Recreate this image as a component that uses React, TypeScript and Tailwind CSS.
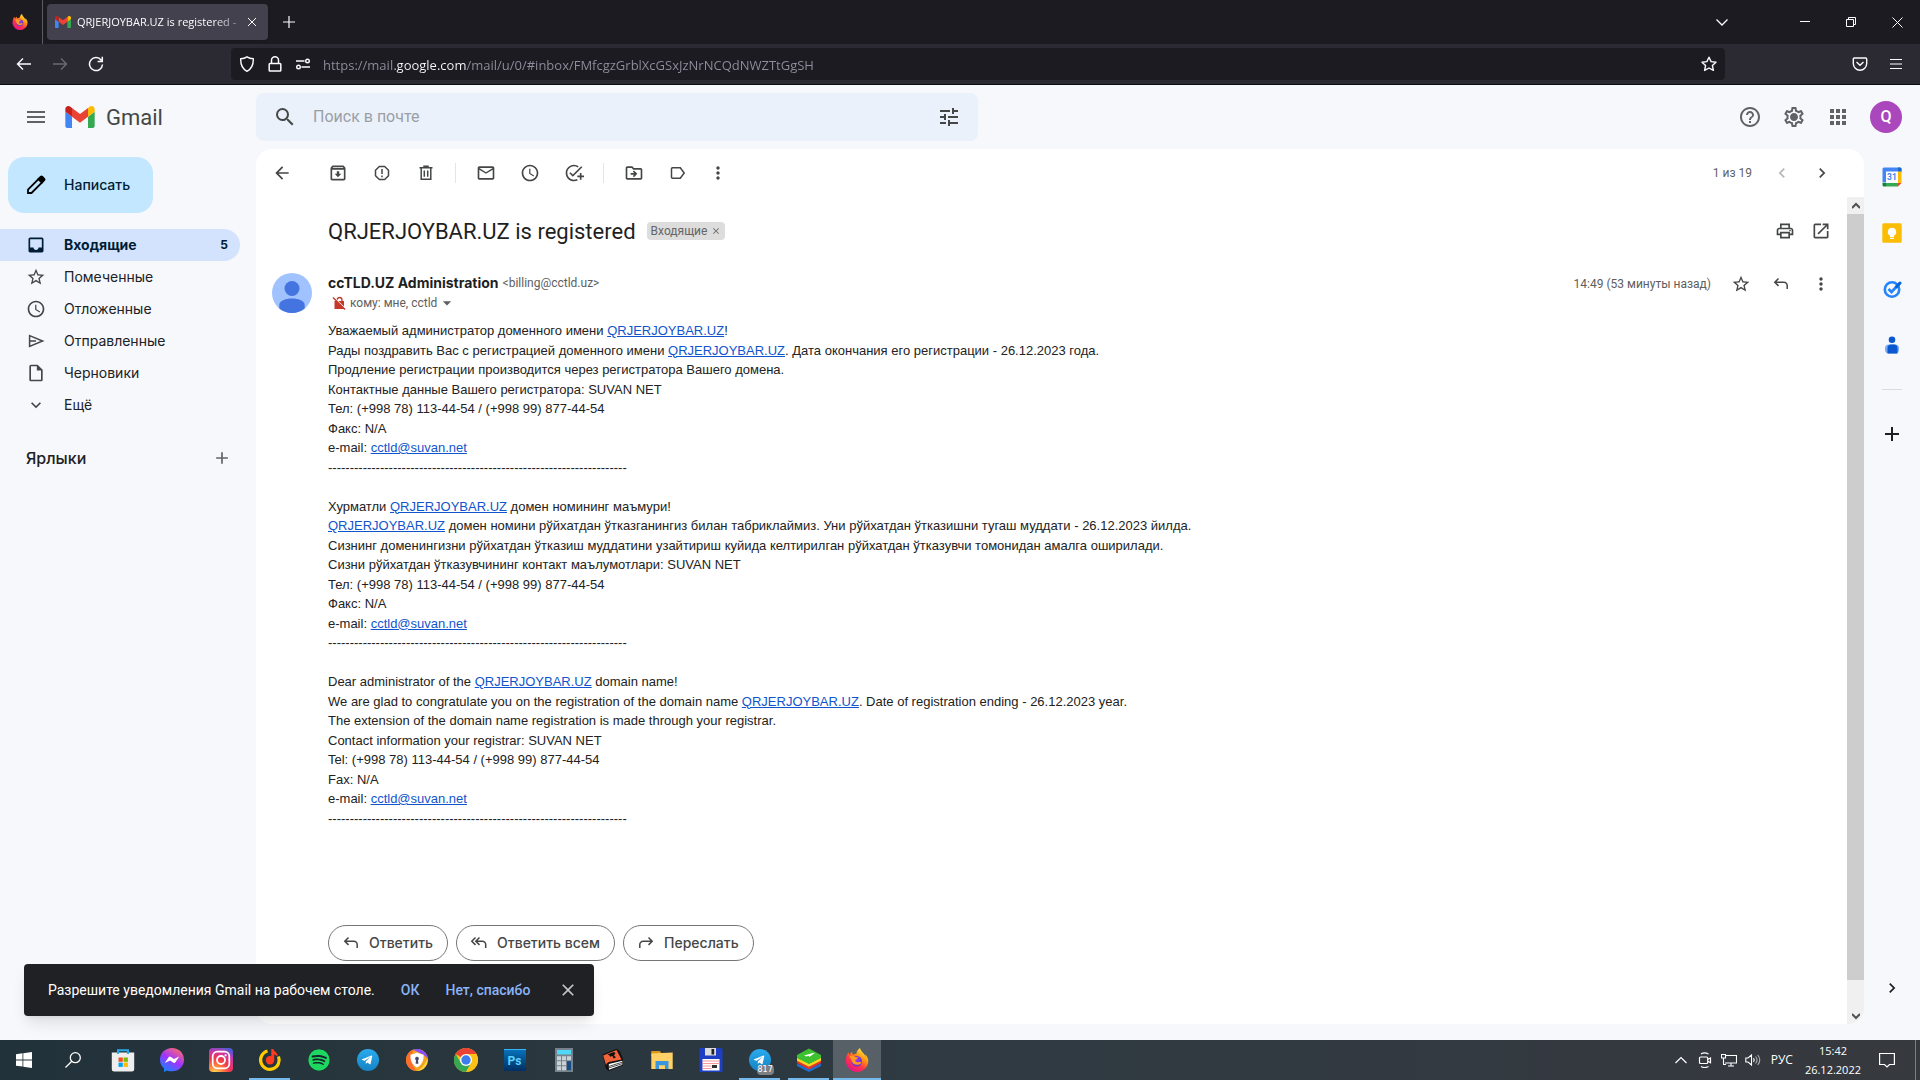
import React from "react";
import {
  MdMenu, MdSearch, MdTune, MdHelpOutline, MdApps, MdArrowBack, MdOutlineArchive, MdMailOutline,
  MdSchedule, MdAddTask, MdOutlineDriveFileMove, MdMoreVert, MdOutlinePrint, MdOpenInNew, MdStarBorder,
  MdInbox, MdOutlineInsertDriveFile, MdExpandMore, MdAdd, MdArrowDropDown, MdChevronLeft,
  MdChevronRight, MdClose, MdOutlineSettings,
} from "react-icons/md";
import { FaSpotify, FaTelegramPlane } from "react-icons/fa";

type IconProps = { className?: string };

function Line({ className = "", box = 20, width = 2, children }: { className?: string; box?: number; width?: number; children: React.ReactNode }) {
  return (
    <svg className={className} viewBox={`0 0 ${box} ${box}`} fill="none" stroke="currentColor" strokeWidth={width} aria-hidden="true">
      {children}
    </svg>
  );
}

/* ---------- drawings ---------- */

function FirefoxLogo({ className }: IconProps) {
  return (
    <svg className={className} viewBox="0 0 24 24" aria-hidden="true">
      <defs>
        <linearGradient id="foxBody" x1="0.85" y1="0.05" x2="0.25" y2="0.95">
          <stop offset="0" stopColor="#fff44f" />
          <stop offset="0.35" stopColor="#ff980e" />
          <stop offset="0.65" stopColor="#ff3647" />
          <stop offset="1" stopColor="#e31587" />
        </linearGradient>
        <radialGradient id="foxGlobe" cx="0.4" cy="0.4" r="0.7">
          <stop offset="0" stopColor="#a33df0" />
          <stop offset="1" stopColor="#5b35c9" />
        </radialGradient>
      </defs>
      <path fill="url(#foxBody)" d="M22.3 9.2c-.5-1.300-1.500-2.600-2.300-3 .6 1.200 1 2.400 1.100 3.300C19.800 6.300 17.600 5 15.800 2.100c-.4-.6-.6-1.200-.7-2-2.600 1.500-3.500 4.200-3.700 5.600-1.200.1-2.300.4-3.200 1-.3-.2-.9-.8-1-2.600-.6.300-1.900 1.300-2.600 2.700C4 6.200 3.800 5 3.900 4.300 2.500 5.300 1 8 .8 12.300.6 18.800 5.600 24 12 24s11.300-5.100 11.300-11.300c0-1.200-.4-2.500-1-3.500z" />
      <circle cx="11.800" cy="13.300" r="5.200" fill="url(#foxGlobe)" />
      <path fill="#ff9a1f" d="M4.500 8.500c2-1.500 4.700-.8 5.600.4 1 .1 2.600.1 3 .5-.2 1.400-2.200 1.500-2.700 2.600-.4 1.300.7 2.600 2.700 2.200 1.500-.4 2.600-.5 3.300.2-1 1.600-2.400 2.400-4.400 2.300-3.500-.2-5.500-2.700-5.700-5.200-.6-.6-1.400-1.500-1.800-3z" />
    </svg>
  );
}

function GmailLogo({ className }: IconProps) {
  return (
    <svg className={className} viewBox="52 42 88 66" aria-hidden="true">
      <path fill="#4285f4" d="M58 108h14V74L52 59v43c0 3.320 2.690 6 6 6" />
      <path fill="#34a853" d="M120 108h14c3.320 0 6-2.690 6-6V59l-20 15" />
      <path fill="#fbbc04" d="M120 48v26l20-15v-8c0-7.420-8.470-11.650-14.400-7.200" />
      <path fill="#ea4335" d="M72 74V48l24 18 24-18v26L96 92" />
      <path fill="#c5221f" d="M52 51v8l20 15V48l-5.600-4.200c-5.940-4.450-14.400-.22-14.400 7.200" />
    </svg>
  );
}

const reportIcon = (
  <Line className="size-5" width={1.5}>
    <path d="M7.300 3.500h5.400l3.800 3.800v5.400l-3.800 3.800H7.300l-3.800-3.800V7.300zM10 6v5M10 12.500v1.700" strokeLinejoin="round" />
  </Line>
);
const trashIcon = (
  <Line className="size-5" width={1.500}>
    <path d="M3.500 4.800h13M8 4.500V3.300h4v1.200M5.200 5v11.200h9.600V5M8.300 7.500v6.300M11.700 7.500v6.300" />
  </Line>
);
const labelIcon = (
  <Line className="size-5" width={1.500}>
    <path d="M4.500 4.700h7.800l3.900 5.300-3.900 5.300H4.500a1 1 0 0 1-1-1V5.700a1 1 0 0 1 1-1z" />
  </Line>
);
const sendIcon = (
  <Line className="size-5" width={1.500}>
    <path d="M3.600 4.600 16.600 10 3.600 15.400zM3.600 10h6.400" />
  </Line>
);
const replyIcon = (
  <Line className="size-5" width={1.500}>
    <path d="M7.500 4.500 3.800 8.200l3.700 3.700M4 8.200h8.800a3.400 3.400 0 0 1 3.400 3.400V15" />
  </Line>
);
const replyAllIcon = (
  <Line className="size-5" width={1.500}>
    <path d="M6.500 4.500 2.800 8.200l3.700 3.700M10.500 4.500 6.800 8.200l3.700 3.700M7 8.200h6.300a3.400 3.400 0 0 1 3.400 3.400V15" />
  </Line>
);
const forwardIcon = (
  <Line className="size-5" width={1.500}>
    <path d="m12.500 4.500 3.700 3.700-3.700 3.700M16 8.200H7.200a3.400 3.400 0 0 0-3.400 3.400V15" />
  </Line>
);
const noEncryptionIcon = (
  <svg className="size-[14px] text-[#c53929]" viewBox="0 0 14 14" fill="none" aria-hidden="true">
    <path d="M5 5V4a2.500 2.500 0 0 1 5 0v1.500" stroke="currentColor" strokeWidth="1.300" />
    <path d="M2.500 5H12v8H2.500z" fill="currentColor" />
    <path d="M2 1.300 14 13.300" stroke="#fff" strokeWidth="1.200" />
    <path d="m1 1.500 12 12" stroke="currentColor" strokeWidth="1.400" />
  </svg>
);

/* ---------- browser chrome ---------- */

function TabStrip() {
  return (
    <div className="flex h-11 shrink-0 items-center bg-[#1c1b22] text-[#fbfbfe]">
      <div className="flex h-full w-[43px] items-center border-r border-[#5b5b66] pl-3">
        <FirefoxLogo className="size-4" />
      </div>
      <div className="ml-1 flex h-9 w-[221px] items-center rounded bg-[#42414d] pl-2 pr-2 shadow">
        <GmailLogo className="h-3 w-4 shrink-0" />
        <span className="ml-[6px] whitespace-nowrap font-['Open_Sans',sans-serif] text-[11px] [mask-image:linear-gradient(90deg,#000_85%,#0006)]">
          QRJERJOYBAR.UZ is registered -
        </span>
        <button aria-label="Закрыть вкладку" className="ml-auto flex size-4 items-center justify-center">
          <Line className="size-2" box={8} width={1}><path d="m0 0 8 8M8 0 0 8" /></Line>
        </button>
      </div>
      <button aria-label="Новая вкладка" className="ml-[15px]">
        <Line className="size-3" box={12} width={1.200}><path d="M6 0v12M0 6h12" /></Line>
      </button>
      <div className="ml-auto flex items-center pr-[17px]">
        <button aria-label="Список вкладок"><Line className="size-3" box={12} width={1.300}><path d="m.5 3.500 5.500 5.500 5.500-5.500" /></Line></button>
        <button aria-label="Свернуть" className="ml-[72px]"><Line className="size-[10px]" box={10} width={1}><path d="M0 4.500h10" /></Line></button>
        <button aria-label="Развернуть" className="ml-9"><Line className="size-[10px]" box={10} width={1}><path d="M.5 2.500h7v7h-7zM2.500 2.500v-2h7v7h-2" /></Line></button>
        <button aria-label="Закрыть" className="ml-9"><Line className="size-[11px]" box={11} width={1}><path d="m.5.5 10 10M10.500.5l-10 10" /></Line></button>
      </div>
    </div>
  );
}

function AddressBar() {
  return (
    <div className="flex h-[41px] shrink-0 items-center border-b border-[#0c0c0d] bg-[#2b2a33] text-[#fbfbfe]">
      <div className="flex w-[231px] items-center gap-5 pl-4">
        <button aria-label="Назад"><Line className="size-4" box={16} width={1.400}><path d="M15 8H1.800M7 2.500 1.500 8 7 13.500" /></Line></button>
        <button aria-label="Вперёд" className="text-[#6b6a73]"><Line className="size-4" box={16} width={1.400}><path d="M1 8h13.200M9 2.500 14.500 8 9 13.500" /></Line></button>
        <button aria-label="Обновить"><Line className="size-4" box={16} width={1.500}><path d="M13.300 4.300A6.500 6.500 0 1 0 14.500 8.500M14.300.8V5.500H9.600" /></Line></button>
      </div>
      <div className="flex h-8 flex-1 items-center gap-3 rounded bg-[#1c1b22] px-2">
        <Line className="size-4 shrink-0" box={16} width={1.400}><path d="M8 .8c2 1.300 4 1.800 6.300 2 .2 5.700-1.500 10-6.300 12.500C3.200 12.800 1.500 8.500 1.700 2.800 4 2.600 6 2.100 8 .8z" /></Line>
        <Line className="size-4 shrink-0" box={16} width={1.500}><path d="M3 7.500h10a.8.8 0 0 1 .8.8v6a.8.8 0 0 1-.8.8H3a.8.8 0 0 1-.8-.8v-6a.8.8 0 0 1 .8-.8zM4.500 7.500V4.300a3.500 3.500 0 0 1 7 0v3.200" /></Line>
        <Line className="size-4 shrink-0" box={16} width={1.400}><path d="M1 5h8.500M6.500 11H15" /><circle cx="12.500" cy="5" r="1.800" /><circle cx="3.500" cy="11" r="1.800" /></Line>
        <input
          aria-label="Адрес"
          className="h-full min-w-0 flex-1 bg-[linear-gradient(90deg,#8f8f9d_0_72px,#fbfbfe_72px_143px,#8f8f9d_143px)] bg-clip-text pt-px font-['Open_Sans',sans-serif] text-[13px] text-transparent caret-white outline-none"
          defaultValue="https://mail.google.com/mail/u/0/#inbox/FMfcgzGrblXcGSxJzNrNCQdNWZTtGgSH"
        />
        <button aria-label="Добавить в закладки"><Line className="size-4" box={16} width={1.400}><path strokeLinejoin="round" d="m8 1.200 2.100 4.400 4.900.6-3.600 3.300 1 4.900L8 12l-4.400 2.400 1-4.900L1 6.200l4.900-.6z" /></Line></button>
      </div>
      <div className="flex w-[195px] items-center justify-end gap-5 pr-4">
        <button aria-label="Pocket"><Line className="size-4" box={16} width={1.400}><path d="M2.300 2h11.400a1 1 0 0 1 1 1v4.500a6.700 6.700 0 0 1-13.400 0V3a1 1 0 0 1 1-1zM4.500 6 8 9.300 11.500 6" /></Line></button>
        <button aria-label="Меню"><Line className="size-4" box={16} width={1.200}><path d="M2 3.500h12M2 8h12M2 12.500h12" /></Line></button>
      </div>
    </div>
  );
}

/* ---------- Gmail ---------- */

function GmailHeader() {
  return (
    <header className="flex h-16 shrink-0 items-center text-[#5f6368]">
      <div className="flex w-64 shrink-0 items-center pl-6">
        <button aria-label="Главное меню"><MdMenu className="size-6" /></button>
        <a href="#inbox" className="ml-[17px] flex items-center gap-[11px]">
          <GmailLogo className="h-[22px] w-[30px]" />
          <span className="text-[22px] text-[#444746]">Gmail</span>
        </a>
      </div>
      <form className="flex h-12 w-[722px] items-center rounded-lg bg-[#eaf1fb] px-[17px] text-[#444746]">
        <button type="button" aria-label="Поиск"><MdSearch className="size-6" /></button>
        <input aria-label="Поиск в почте" placeholder="Поиск в почте" className="ml-4 min-w-0 flex-1 bg-transparent text-base outline-none placeholder:text-[#9b9fa5]" />
        <button type="button" aria-label="Параметры поиска"><MdTune className="size-6" /></button>
      </form>
      <div className="ml-auto flex items-center gap-5 pr-[18px]">
        <button aria-label="Поддержка"><MdHelpOutline className="size-6" /></button>
        <button aria-label="Настройки" className="relative">
          <MdOutlineSettings className="size-6" />
          <span className="absolute inset-[9px] rounded-full bg-[#5f6368]" />
        </button>
        <button aria-label="Приложения Google"><MdApps className="size-6" /></button>
        <button aria-label="Аккаунт" className="flex size-8 items-center justify-center rounded-full bg-[#ab47bc] text-base font-medium text-white">Q</button>
      </div>
    </header>
  );
}

const folders = [
  { name: "Входящие", icon: <MdInbox className="size-5" />, count: 5 },
  { name: "Помеченные", icon: <MdStarBorder className="size-5" /> },
  { name: "Отложенные", icon: <MdSchedule className="size-5" /> },
  { name: "Отправленные", icon: sendIcon },
  { name: "Черновики", icon: <MdOutlineInsertDriveFile className="size-5" /> },
  { name: "Ещё", icon: <MdExpandMore className="size-5" /> },
];

function Sidebar() {
  return (
    <aside className="w-64 shrink-0 pt-2 font-['Inter',sans-serif]">
      <button className="ml-2 flex h-14 items-center gap-4 rounded-2xl bg-[#c2e7ff] pl-4 pr-[23px] text-sm font-medium text-[#001d35]">
        <Line className="size-6 text-black" box={24} width={1.800}>
          <path d="M4 20v-3.500L14.500 6l3.500 3.500L7.500 20z" />
          <path d="m14.500 6 2.300-2.300a1 1 0 0 1 1.400 0l2.100 2.100a1 1 0 0 1 0 1.400L18 9.500z" fill="currentColor" />
        </Line>
        Написать
      </button>
      <nav className="mt-4 text-sm">
        {folders.map((f) => (
          <a
            key={f.name}
            href="#folder"
            className={
              f.count
                ? "mr-4 flex h-8 items-center gap-[18px] rounded-r-full bg-[#d3e3fd] pl-[26px] pr-3 font-bold text-[#001d35]"
                : "mr-4 flex h-8 items-center gap-[18px] pl-[26px] pr-3 text-[#202124]"
            }
          >
            <span className={f.count ? "" : "text-[#444746]"}>{f.icon}</span>
            {f.name}
            {f.count && <span className="ml-auto text-xs">{f.count}</span>}
          </a>
        ))}
      </nav>
      <div className="mt-5 flex h-[34px] items-center justify-between pl-[26px] pr-6">
        <h2 className="text-base font-medium text-[#202124]">Ярлыки</h2>
        <button aria-label="Создать ярлык" className="text-[#5f6368]"><MdAdd className="size-5" /></button>
      </div>
    </aside>
  );
}

function MailToolbar() {
  return (
    <div className="flex h-12 shrink-0 items-center pl-4 pr-8 text-[#444746]">
      <button aria-label="Назад к списку"><MdArrowBack className="size-5" /></button>
      <div className="ml-9 flex gap-6">
        <button aria-label="Архивировать"><MdOutlineArchive className="size-5" /></button>
        <button aria-label="В спам!">{reportIcon}</button>
        <button aria-label="Удалить">{trashIcon}</button>
      </div>
      <span className="ml-[19px] mr-5 h-5 w-px bg-[#e3e5e8]" />
      <div className="flex gap-6">
        <button aria-label="Пометить как непрочитанное"><MdMailOutline className="size-5" /></button>
        <button aria-label="Отложить"><MdSchedule className="size-5" /></button>
        <button aria-label="Добавить в задачи"><MdAddTask className="size-5" /></button>
      </div>
      <span className="ml-[19px] mr-5 h-5 w-px bg-[#e3e5e8]" />
      <div className="flex gap-6">
        <button aria-label="Переместить"><MdOutlineDriveFileMove className="size-5" /></button>
        <button aria-label="Ярлыки">{labelIcon}</button>
      </div>
      <button aria-label="Ещё" className="ml-5"><MdMoreVert className="size-5" /></button>
      <div className="ml-auto flex items-center gap-5">
        <span className="text-xs text-[#5f6368]">1 из 19</span>
        <button aria-label="Новее" className="text-[#b5b7b9]"><MdChevronLeft className="size-5" /></button>
        <button aria-label="Старее"><MdChevronRight className="size-5" /></button>
      </div>
    </div>
  );
}

function BodyLink({ children }: { children: React.ReactNode }) {
  return <a href="#link" className="text-[#1155cc] underline">{children}</a>;
}

const domain = <BodyLink>QRJERJOYBAR.UZ</BodyLink>;
const email = <BodyLink>cctld@suvan.net</BodyLink>;
const rule = "---------------------------------------------------------------------";

const sections: React.ReactNode[][] = [
  [
    <>Уважаемый администратор доменного имени {domain}!</>,
    <>Рады поздравить Вас с регистрацией доменного имени {domain}. Дата окончания его регистрации - 26.12.2023 года.</>,
    "Продление регистрации производится через регистратора Вашего домена.",
    "Контактные данные Вашего регистратора: SUVAN NET",
    "Тел: (+998 78) 113-44-54 / (+998 99) 877-44-54",
    "Факс: N/A",
    <>e-mail: {email}</>,
    rule,
  ],
  [
    <>Хурматли {domain} домен номининг маъмури!</>,
    <>{domain} домен номини рўйхатдан ўтказганингиз билан табриклаймиз. Уни рўйхатдан ўтказишни тугаш муддати - 26.12.2023 йилда.</>,
    "Сизнинг доменингизни рўйхатдан ўтказиш муддатини узайтириш куйида келтирилган рўйхатдан ўтказувчи томонидан амалга оширилади.",
    "Сизни рўйхатдан ўтказувчининг контакт маълумотлари: SUVAN NET",
    "Тел: (+998 78) 113-44-54 / (+998 99) 877-44-54",
    "Факс: N/A",
    <>e-mail: {email}</>,
    rule,
  ],
  [
    <>Dear administrator of the {domain} domain name!</>,
    <>We are glad to congratulate you on the registration of the domain name {domain}. Date of registration ending - 26.12.2023 year.</>,
    "The extension of the domain name registration is made through your registrar.",
    "Contact information your registrar: SUVAN NET",
    "Tel: (+998 78) 113-44-54 / (+998 99) 877-44-54",
    "Fax: N/A",
    <>e-mail: {email}</>,
    rule,
  ],
];

function ReplyButton({ icon, children }: { icon: React.ReactNode; children: React.ReactNode }) {
  return (
    <button className="flex h-9 items-center gap-2 rounded-full border border-[#747775] pl-3 pr-[14px] font-['Inter',sans-serif] text-sm font-medium text-[#444746]">
      {icon}
      {children}
    </button>
  );
}

function Message() {
  return (
    <div className="min-w-0 flex-1">
      <div className="flex h-[68px] items-center pl-[72px] pr-4 text-[#444746]">
        <h1 className="text-[22px] text-[#1f1f1f]">QRJERJOYBAR.UZ is registered</h1>
        <span className="ml-[11px] flex h-[18px] items-center gap-1 rounded bg-[#ddd] px-1 text-xs text-[#666]">
          Входящие
          <button aria-label="Удалить ярлык"><MdClose className="size-[10px]" /></button>
        </span>
        <div className="ml-auto flex gap-4">
          <button aria-label="Печать"><MdOutlinePrint className="size-5" /></button>
          <button aria-label="В новом окне"><MdOpenInNew className="size-5" /></button>
        </div>
      </div>
      <div className="flex gap-4 px-4 pt-2">
        <svg className="size-10 shrink-0" viewBox="0 0 40 40" aria-hidden="true">
          <circle cx="20" cy="20" r="20" fill="#a0c3ff" />
          <circle cx="20" cy="15.500" r="7.500" fill="#4374e0" />
          <path fill="#4374e0" d="M7.300 35.500V32c0-4 5.700-6.500 12.700-6.500S32.700 28 32.700 32v3.500A20 20 0 0 1 20 40a20 20 0 0 1-12.700-4.500z" />
        </svg>
        <div className="min-w-0 flex-1">
          <div className="flex h-5 items-center">
            <span className="font-['Inter',sans-serif] text-sm font-bold text-[#1f1f1f]">ccTLD.UZ Administration</span>
            <span className="ml-1 text-xs text-[#5e5e5e]">&lt;billing@cctld.uz&gt;</span>
          </div>
          <div className="flex h-5 items-center pl-1 text-xs text-[#5e5e5e]">
            {noEncryptionIcon}
            <span className="ml-1">кому: мне, cctld</span>
            <button aria-label="Показать детали"><MdArrowDropDown className="size-5" /></button>
          </div>
        </div>
        <div className="flex h-[22px] items-center gap-5 text-[#444746]">
          <time className="text-xs text-[#5e5e5e]">14:49 (53 минуты назад)</time>
          <button aria-label="Пометить"><MdStarBorder className="size-5" /></button>
          <button aria-label="Ответить">{replyIcon}</button>
          <button aria-label="Ещё"><MdMoreVert className="size-5" /></button>
        </div>
      </div>
      <div className="flex flex-col pl-[72px] pt-2 font-['Liberation_Sans',sans-serif] text-[13px] leading-[1.5] text-[#222]">
        {sections.map((lines, i) => (
          <p key={i}>
            {lines.map((line, j) => (
              <React.Fragment key={j}>{line}<br /></React.Fragment>
            ))}
            {i < sections.length - 1 && <br />}
          </p>
        ))}
      </div>
      <div className="mt-[97px] flex gap-2 pl-[72px]">
        <ReplyButton icon={replyIcon}>Ответить</ReplyButton>
        <ReplyButton icon={replyAllIcon}>Ответить всем</ReplyButton>
        <ReplyButton icon={forwardIcon}>Переслать</ReplyButton>
      </div>
    </div>
  );
}

function Scrollbar() {
  return (
    <div className="flex w-[17px] shrink-0 flex-col bg-[#f0f0f0] text-[#505050]">
      <span className="flex h-[17px] items-center justify-center"><Line className="size-2" box={8} width={2}><path d="m0 6 4-4 4 4" /></Line></span>
      <span className="flex-1 bg-[#cdcdcd]" />
      <span className="mt-[27px] flex h-[17px] items-center justify-center"><Line className="size-2" box={8} width={2}><path d="m0 2 4 4 4-4" /></Line></span>
    </div>
  );
}

function SidePanel() {
  return (
    <aside className="flex w-14 shrink-0 flex-col items-center pt-[18px] text-[#1f1f1f]">
      <div className="flex flex-col gap-9">
        <button aria-label="Календарь">
          <svg className="size-5" viewBox="0 0 20 20">
            <path fill="#4285f4" d="M2 .5h16a1.500 1.500 0 0 1 1.500 1.500v3H4v10.500H.5V2A1.500 1.500 0 0 1 2 .5z" />
            <path fill="#1967d2" d="M16 .5h2A1.500 1.500 0 0 1 19.500 2v2.500H16z" />
            <path fill="#fbbc04" d="M16 4.500h3.500V16H16z" />
            <path fill="#34a853" d="M4 16h12v3.500H4z" />
            <path fill="#188038" d="M.5 16H4v3.500H2A1.500 1.500 0 0 1 .5 18z" />
            <path fill="#ea4335" d="M16 16h3.500L16 19.500z" />
            <path fill="#fff" d="M4 4.500h12V16H4z" />
            <text x="10" y="13.300" textAnchor="middle" fontSize="8.500" fontWeight="700" fill="#4285f4" fontFamily="Roboto, sans-serif">31</text>
          </svg>
        </button>
        <button aria-label="Keep">
          <svg className="size-5" viewBox="0 0 20 20">
            <rect x=".3" y=".3" width="19.400" height="19.400" rx="1.500" fill="#fbbc04" />
            <path fill="#fff" d="M10 4.800a4.200 4.200 0 0 0-2 7.900V14h4v-1.300a4.200 4.200 0 0 0-2-7.900zM8 14.800h4V16H8z" />
          </svg>
        </button>
        <button aria-label="Задачи">
          <svg className="size-5" viewBox="0 0 20 20" fill="none">
            <circle cx="10" cy="10.500" r="7.200" stroke="#2684fc" strokeWidth="2.600" />
            <path d="m6.500 10 3 3 8-8.500" stroke="#2684fc" strokeWidth="2.800" />
            <path d="m14.500 7.700 3.500-3.700" stroke="#0066da" strokeWidth="3" strokeLinecap="round" />
          </svg>
        </button>
        <button aria-label="Контакты">
          <svg className="size-5" viewBox="0 0 20 20">
            <circle cx="10" cy="4.800" r="3.300" fill="#0b57d0" />
            <rect x="3" y="9.500" width="14" height="9" rx="4" fill="#7baaf7" />
            <path fill="#0b57d0" d="M9 9.500h3a3.500 3.500 0 0 1 3.500 3.500v5.500h-10V13A3.500 3.500 0 0 1 9 9.500z" />
          </svg>
        </button>
      </div>
      <hr className="mt-[34px] w-5 border-[#dadce0]" />
      <button aria-label="Установить дополнения" className="mt-8"><MdAdd className="size-6" /></button>
      <button aria-label="Скрыть панель" className="mb-[42px] mt-auto"><MdChevronRight className="size-5" /></button>
    </aside>
  );
}

function Toast() {
  return (
    <div role="status" className="absolute bottom-6 left-6 flex h-[52px] items-center gap-[26px] rounded bg-[#202124] pl-6 pr-4 text-sm text-white shadow-lg">
      <span>Разрешите уведомления Gmail на рабочем столе.</span>
      <button className="font-medium text-[#8ab4f8]">ОК</button>
      <button className="font-medium text-[#8ab4f8]">Нет, спасибо</button>
      <button aria-label="Закрыть" className="pl-[2px] text-[#c4c7c5]"><MdClose className="size-5" /></button>
    </div>
  );
}

/* ---------- taskbar ---------- */

function TelegramLogo() {
  return (
    <span className="flex size-[22px] items-center justify-center rounded-full bg-gradient-to-b from-[#2aabee] to-[#1583c4]">
      <FaTelegramPlane className="mr-px size-3 text-white" />
    </span>
  );
}

const apps: { name: string; open?: boolean; active?: boolean; icon: React.ReactNode }[] = [
  {
    name: "Microsoft Store",
    icon: (
      <svg className="size-6" viewBox="0 0 24 24">
        <path d="M.8 4.500h22.400V21a2.500 2.500 0 0 1-2.500 2.500H3.300A2.500 2.500 0 0 1 .8 21z" fill="#eee" />
        <path d="M7 6V2.200h10V6" fill="none" stroke="#29a9ea" strokeWidth="2" />
        <path fill="#f25022" d="M7.500 9.500h4.300v4.300H7.500z" /><path fill="#7fba00" d="M12.600 9.500h4.300v4.300h-4.300z" />
        <path fill="#00a4ef" d="M7.500 14.600h4.300v4.300H7.500z" /><path fill="#ffb900" d="M12.600 14.600h4.300v4.300h-4.300z" />
      </svg>
    ),
  },
  {
    name: "Messenger",
    icon: (
      <svg className="size-6" viewBox="0 0 24 24">
        <defs><linearGradient id="msg" x1="0.2" y1="1" x2="0.8" y2="0"><stop offset="0" stopColor="#0a8bff" /><stop offset="0.500" stopColor="#a033ff" /><stop offset="1" stopColor="#ff6c6c" /></linearGradient></defs>
        <path fill="url(#msg)" d="M12 0C5.200 0 0 5 0 11.700c0 3.500 1.400 6.500 4 8.600V24l3-1.600c1.500.6 3.200.9 5 .9 6.800 0 12-5 12-11.600S18.800 0 12 0z" />
        <path fill="#fff" d="m4.800 15 3.600-5.600a1.800 1.800 0 0 1 2.600-.5l2.900 2.100 5.300-2.500-3.600 5.600a1.800 1.800 0 0 1-2.600.5L10.100 12.500z" />
      </svg>
    ),
  },
  {
    name: "Instagram",
    icon: (
      <svg className="size-6" viewBox="0 0 24 24" fill="none">
        <defs>
          <radialGradient id="ig" cx="0.25" cy="1.050" r="1.150"><stop offset="0" stopColor="#ffdd55" /><stop offset="0.300" stopColor="#ff7a3d" /><stop offset="0.550" stopColor="#f0364f" /><stop offset="0.800" stopColor="#c837ab" /><stop offset="1" stopColor="#4f5bd5" /></radialGradient>
        </defs>
        <rect width="24" height="24" rx="4" fill="url(#ig)" />
        <rect x="3.700" y="3.700" width="16.600" height="16.600" rx="4.500" stroke="#fff" strokeWidth="1.700" />
        <circle cx="12" cy="12" r="4" stroke="#fff" strokeWidth="1.800" /><circle cx="16.600" cy="7.300" r="1.100" fill="#fff" />
      </svg>
    ),
  },
  {
    name: "Яндекс Музыка",
    open: true,
    icon: (
      <svg className="size-6" viewBox="0 0 24 24" fill="none">
        <path d="M9.500 3A9.300 9.300 0 1 0 20.500 8.500" stroke="#ffcc00" strokeWidth="3.200" />
        <circle cx="12" cy="12.300" r="4.200" fill="#ff3b1f" /><path d="M13.300 1h2c.5 3 5 3 4.200 8-1-2-2.500-2-3.300-2.500v6h-2.900z" fill="#ff3b1f" />
      </svg>
    ),
  },
  { name: "Spotify", icon: <FaSpotify className="size-[22px] rounded-full bg-[#16232a] text-[#1ed760]" /> },
  { name: "Telegram", icon: <TelegramLogo /> },
  {
    name: "Браузер",
    icon: (
      <svg className="size-6" viewBox="0 0 24 24">
        <circle cx="12" cy="12" r="11" fill="#f4a41c" /><path fill="#8a4dff" d="M8 1.800a11 11 0 0 1 15 9.200c-3-4-8-6-15-9.200z" />
        <path fill="#ff6b2c" d="M1 12A11 11 0 0 1 9 1.400c-3 4-4 12 2 21.600A11 11 0 0 1 1 12z" /><path fill="#ffd84a" d="M22.500 10.500A11 11 0 0 1 12 23c4-2 8-6 10.500-12.500z" />
        <path fill="#fff" d="M12 4.500c2 1.200 4 1.800 6.500 2 .5 6-1.500 10.500-6.500 13-5-2.500-7-7-6.500-13 2.500-.2 4.500-.8 6.500-2z" />
        <path fill="#4a4a68" d="M12 8.800a1.900 1.900 0 0 0-1 3.500l-.4 3.500h2.800l-.4-3.500a1.900 1.900 0 0 0-1-3.500z" />
      </svg>
    ),
  },
  {
    name: "Chrome",
    icon: (
      <svg className="size-6" viewBox="0 0 24 24">
        <circle cx="12" cy="12" r="12" fill="#fbc116" />
        <path fill="#ea4335" d="M12 12 1.600 6A12 12 0 0 1 22.400 6H12z" /><path fill="#34a853" d="M12 24A12 12 0 0 1 1.600 6L6.800 15 12 12l5.200 3z" />
        <path fill="#fbc116" d="M12 6h10.400A12 12 0 0 1 12 24l5.200-9z" />
        <circle cx="12" cy="12" r="6" fill="#fff" /><circle cx="12" cy="12" r="4.700" fill="#3b7ded" />
      </svg>
    ),
  },
  { name: "Photoshop", icon: <span className="flex size-[22px] items-center justify-center border-t border-[#35b5f5] bg-gradient-to-b from-[#0672ba] to-[#022f63] text-xs font-bold text-[#5fd0ff]">Ps</span> },
  {
    name: "Калькулятор",
    icon: (
      <svg className="size-6" viewBox="0 0 24 24">
        <path fill="#76828c" d="M3 0h18v24H3z" /><path fill="#4fd8f7" d="M5 2h14v4.500H5z" />
        <path fill="#c9d2d8" d="M5 8.200h4v4H5zM10 8.200h4v4h-4zM15 8.200h4v4h-4zM5 13.200h4v4H5zM10 13.200h4v4h-4zM5 18.200h4v4H5zM10 18.200h4v4h-4z" /><path fill="#164b86" d="M15 13.200h4v9h-4z" />
      </svg>
    ),
  },
  {
    name: "Словарь",
    icon: (
      <svg className="size-6" viewBox="0 0 24 24">
        <path fill="#111" d="M1.500 6.500 15.500.8l3 2 3.500 8v6.500L8 23l-3-2z" /><path fill="#f2653a" d="M2.200 7.500 15.500 2l5 9.500L9 13.800c-3 .5-4.500 2.500-3.500 5z" />
        <path fill="#fff" d="m7.800 16 13.500-3.200v4L8 21.800z" /><path stroke="#222" strokeWidth=".8" d="m7.500 18.500 13.800-4.300M7.500 20l13.800-4.300" />
        <path fill="#111" d="m6.500 6.500 6-2.500 2 1L13 7.500l2 2-2.500 1-1-2.500-2.500.8-.3-1.300z" />
      </svg>
    ),
  },
  {
    name: "Проводник",
    icon: (
      <svg className="size-6" viewBox="0 0 24 24">
        <path fill="#d99a1b" d="M1.300 3h8.500l1.500 2v3h-10z" /><path fill="#ffd267" d="M1.300 5.500 22.700 4.500V21H1.300z" />
        <path fill="#3a96dd" d="M5.500 13h13v8H15v-3.700H9V21H5.500z" />
      </svg>
    ),
  },
  {
    name: "Total Commander",
    icon: (
      <svg className="size-6" viewBox="0 0 24 24">
        <path fill="#1d3fc4" d="M.5 0H22l1.500 1.500V24H.5z" /><path fill="#dcdcdc" d="M6 0h11v7.500H6z" /><path fill="#222" d="M12.500 1h2.700v5.500h-2.700z" />
        <path fill="#fff" d="M3.500 11h17v11.500h-17z" /><path stroke="#f39a9a" strokeWidth="1.200" d="M3.500 13h17M3.500 15.500h17M3.500 18h9M3.500 20.500h9" /><path fill="#333" d="M13 17h5v3h-5z" />
      </svg>
    ),
  },
  {
    name: "Telegram Desktop",
    open: true,
    icon: (
      <span className="relative">
        <TelegramLogo />
        <span className="absolute -bottom-1 left-2 rounded-sm bg-[#7d8083] px-px font-['DejaVu_Sans',sans-serif] text-[8px] leading-[10px] text-white">817</span>
      </span>
    ),
  },
  {
    name: "BlueStacks",
    open: true,
    icon: (
      <svg className="size-6" viewBox="0 0 24 24">
        <path fill="#1b6fd1" d="M0 15.500 12 21l12-5.500V18l-12 6-12-6z" /><path fill="#e5342c" d="m0 12.500 12 6 12-6V15l-12 6.500L0 15z" /><path fill="#ffd21f" d="m0 9.500 12 6 12-6v3.200l-12 6-12-6z" />
        <path fill="#3ec130" d="M12 .5 24 7v3l-12 6L0 10V7z" /><path fill="#fff" d="M7 7.500 15 5.200l3-.4L12.500 9l-1-1.200-2 .8z" />
      </svg>
    ),
  },
  { name: "Firefox", open: true, active: true, icon: <FirefoxLogo className="size-6" /> },
];

function Taskbar() {
  return (
    <footer className="flex h-10 shrink-0 bg-gradient-to-r from-[#22323a] via-[#2f3a42] to-[#36393e] text-xs text-white">
      <button aria-label="Пуск" className="flex w-12 items-center justify-center">
        <svg className="size-4" viewBox="0 0 16 16" fill="#fff"><path d="M0 2.200 6.500 1.300v6.200H0zM7.300 1.200 16 0v7.500H7.300zM0 8.400h6.500v6.200L0 13.700zM7.300 8.400H16V16l-8.700-1.200z" /></svg>
      </button>
      <button aria-label="Поиск" className="mr-px flex w-[49px] items-center justify-center">
        <Line className="size-4" box={16} width={1.300}><circle cx="10.300" cy="5.700" r="5" /><path d="M6.800 9.200.5 15.500" /></Line>
      </button>
      {apps.map((app) => (
        <button
          key={app.name}
          aria-label={app.name}
          className={app.active ? "relative flex w-12 items-center justify-center bg-white/20" : "relative flex w-[49px] items-center justify-center"}
        >
          {app.icon}
          {app.open && <span className={app.active ? "absolute inset-x-0 bottom-0 h-[2px] bg-[#76b9ed]" : "absolute inset-x-1 bottom-0 h-[2px] bg-[#76b9ed]"} />}
        </button>
      ))}
      <div className="ml-auto flex items-center font-['Open_Sans',sans-serif]">
        <button aria-label="Скрытые значки"><Line className="size-3" box={12} width={1.200}><path d="m.5 9 5.500-5.500L11.500 9" /></Line></button>
        <Line className="ml-[10px] size-4" box={16} width={1.200}><path d="M3.500 5h6.200a1 1 0 0 1 1 1v4.500a1 1 0 0 1-1 1H3.500a1 1 0 0 1-1-1V6a1 1 0 0 1 1-1zM10.700 7.500l2.800-1.500v4.800l-2.800-1.500M4 2c2-1.300 5-1.300 7.500 0M4 14.500c2 1.300 5 1.300 7.500 0" /></Line>
        <Line className="ml-2 size-4" box={16} width={1.100}><path d="M5 3.500h10.500v7.500H4M10 11v3M7 14h6M.5 2.500h4v3.500h-4zM2.500 6v6.500H5" /></Line>
        <Line className="ml-2 size-4" box={16} width={1.100}><path d="M.8 6v4H3l3.500 3V3L3 6zM8.500 6.200c.8 1 .8 2.600 0 3.600" /><path opacity=".6" d="M10.500 4.500c1.800 2 1.800 5 0 7M12.700 3c2.500 3 2.500 7 0 10" /></Line>
        <button className="ml-[10px]">РУС</button>
        <time className="ml-3 text-center text-[11px] leading-[19px]">15:42<br />26.12.2022</time>
        <button aria-label="Уведомления" className="ml-[18px] mr-5"><Line className="size-4" box={16} width={1.200}><path d="M.6 1.500h14.800v11H10.500L8 15l-2.500-2.500H.6z" /></Line></button>
        <span className="mr-1 h-10 w-px bg-[#7c8084]" />
      </div>
    </footer>
  );
}

export default function App() {
  return (
    <div className="flex h-screen flex-col overflow-hidden bg-[#f6f8fc] font-['Roboto',sans-serif] [&_button]:shrink-0">
      <TabStrip />
      <AddressBar />
      <div className="relative flex min-h-0 flex-1 flex-col">
        <GmailHeader />
        <div className="flex min-h-0 flex-1">
          <Sidebar />
          <main className="mb-4 flex min-w-0 flex-1 flex-col overflow-hidden rounded-2xl bg-white">
            <MailToolbar />
            <div className="flex min-h-0 flex-1">
              <Message />
              <Scrollbar />
            </div>
          </main>
          <SidePanel />
        </div>
        <Toast />
      </div>
      <Taskbar />
    </div>
  );
}
